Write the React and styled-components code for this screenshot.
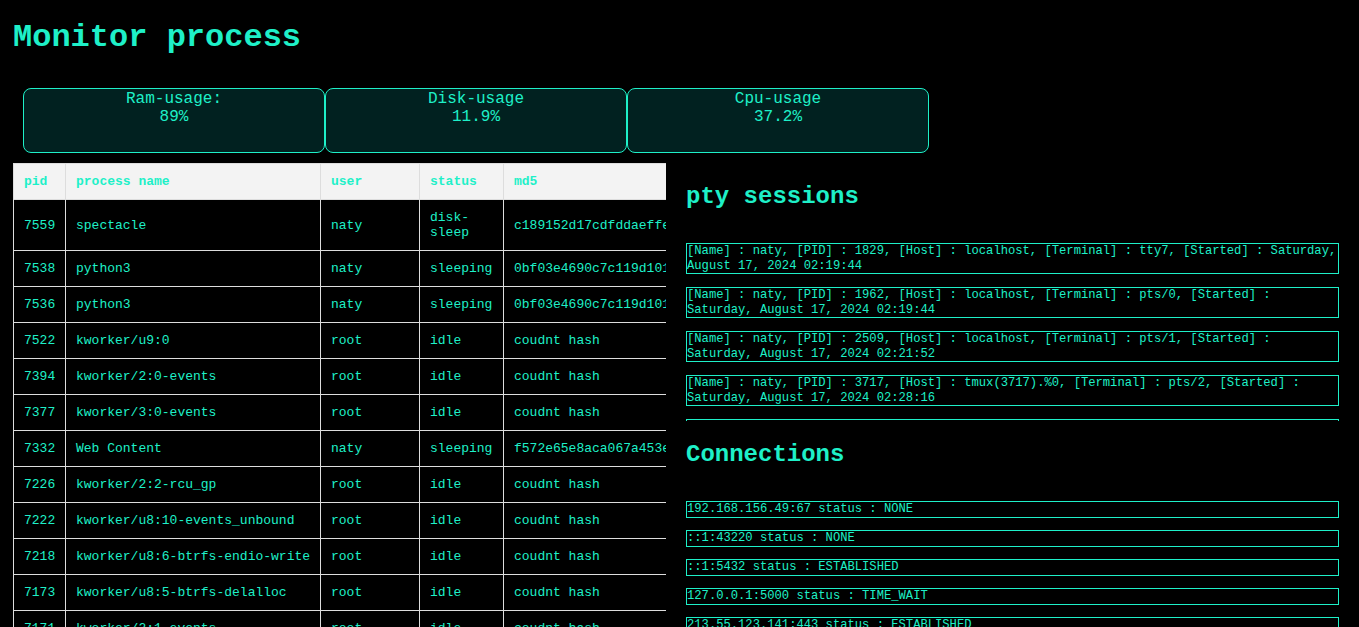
import React from "react";
import styled, { createGlobalStyle } from "styled-components";

const accent = "#1ef0c8";

const GlobalStyle = createGlobalStyle`
  html, body {
    margin: 0;
    padding: 0;
    background: #000;
  }
  body {
    font-family: "Liberation Mono", "DejaVu Sans Mono", monospace;
    color: ${accent};
  }
`;

const processes = [
  ["7559", "spectacle", "naty", "disk-sleep", "c189152d17cdfddaeffe3a0c6b1e92d4"],
  ["7538", "python3", "naty", "sleeping", "0bf03e4690c7c119d1014c5a7e2b8f36"],
  ["7536", "python3", "naty", "sleeping", "0bf03e4690c7c119d1014c5a7e2b8f36"],
  ["7522", "kworker/u9:0", "root", "idle", "coudnt hash"],
  ["7394", "kworker/2:0-events", "root", "idle", "coudnt hash"],
  ["7377", "kworker/3:0-events", "root", "idle", "coudnt hash"],
  ["7332", "Web Content", "naty", "sleeping", "f572e65e8aca067a453e9d1b0c27f6a8"],
  ["7226", "kworker/2:2-rcu_gp", "root", "idle", "coudnt hash"],
  ["7222", "kworker/u8:10-events_unbound", "root", "idle", "coudnt hash"],
  ["7218", "kworker/u8:6-btrfs-endio-write", "root", "idle", "coudnt hash"],
  ["7173", "kworker/u8:5-btrfs-delalloc", "root", "idle", "coudnt hash"],
  ["7171", "kworker/2:1-events", "root", "idle", "coudnt hash"],
  ["7160", "kworker/0:1-events", "root", "idle", "coudnt hash"],
  ["7112", "Isolated Web Co", "naty", "sleeping", "f572e65e8aca067a453e9d1b0c27f6a8"],
];

const sessions = [
  "[Name] : naty, [PID] : 1829, [Host] : localhost, [Terminal] : tty7, [Started] : Saturday, August 17, 2024 02:19:44",
  "[Name] : naty, [PID] : 1962, [Host] : localhost, [Terminal] : pts/0, [Started] : Saturday, August 17, 2024 02:19:44",
  "[Name] : naty, [PID] : 2509, [Host] : localhost, [Terminal] : pts/1, [Started] : Saturday, August 17, 2024 02:21:52",
  "[Name] : naty, [PID] : 3717, [Host] : tmux(3717).%0, [Terminal] : pts/2, [Started] : Saturday, August 17, 2024 02:28:16",
  "[Name] : naty, [PID] : 4120, [Host] : tmux(3717).%1, [Terminal] : pts/3, [Started] : Saturday, August 17, 2024 02:31:05",
];

const connections = [
  "192.168.156.49:67 status : NONE",
  "::1:43220 status : NONE",
  "::1:5432 status : ESTABLISHED",
  "127.0.0.1:5000 status : TIME_WAIT",
  "213.55.123.141:443 status : ESTABLISHED",
  "34.107.243.93:443 status : ESTABLISHED",
  "127.0.0.1:5432 status : LISTEN",
];

const App = () => {
  return (
    <Page>
      <GlobalStyle />
      <Title>Monitor process</Title>

      <Stats>
        <StatCard>
          <div>Ram-usage:</div>
          <div>89%</div>
        </StatCard>
        <StatCard>
          <div>Disk-usage</div>
          <div>11.9%</div>
        </StatCard>
        <StatCard>
          <div>Cpu-usage</div>
          <div>37.2%</div>
        </StatCard>
      </Stats>

      <Columns>
        <TableWrap>
          <Table>
            <colgroup>
              <col style={{ width: 52 }} />
              <col style={{ width: 255 }} />
              <col style={{ width: 99 }} />
              <col style={{ width: 84 }} />
              <col style={{ width: 280 }} />
            </colgroup>
            <thead>
              <tr>
                <th>pid</th>
                <th>process name</th>
                <th>user</th>
                <th>status</th>
                <th>md5</th>
              </tr>
            </thead>
            <tbody>
              {processes.map((p) => (
                <tr key={p[0]}>
                  {p.map((cell, i) => (
                    <td key={i}>{cell}</td>
                  ))}
                </tr>
              ))}
            </tbody>
          </Table>
        </TableWrap>

        <Side>
          <SectionTitle>pty sessions</SectionTitle>
          <SessionList>
            {sessions.map((s) => (
              <SessionBox key={s}>{s}</SessionBox>
            ))}
          </SessionList>

          <SectionTitle>Connections</SectionTitle>
          <ConnList>
            {connections.map((c) => (
              <ConnBox key={c}>{c}</ConnBox>
            ))}
          </ConnList>
        </Side>
      </Columns>
    </Page>
  );
};

const Page = styled.div`
  padding: 20px 0 0 13px;
`;

const Title = styled.h1`
  margin: 0;
  font-size: 32px;
  font-weight: bold;
  line-height: 36px;
  color: ${accent};
`;

const Stats = styled.div`
  display: flex;
  margin: 32px 0 0 10px;
`;

const StatCard = styled.div`
  box-sizing: border-box;
  width: 302px;
  height: 65px;
  padding-top: 1px;
  border: 1px solid ${accent};
  border-radius: 8px;
  background: #012120;
  text-align: center;
  font-size: 16px;
  line-height: 18px;
  color: ${accent};
`;

const Columns = styled.div`
  display: flex;
  align-items: flex-start;
  margin-top: 10px;
`;

const TableWrap = styled.div`
  width: 653px;
  flex-shrink: 0;
  overflow: hidden;
`;

const Table = styled.table`
  border-collapse: collapse;
  table-layout: fixed;
  width: 770px;
  font-size: 13px;

  th,
  td {
    border: 1px solid #dddddd;
    padding: 10px 4px 10px 10px;
    text-align: left;
    vertical-align: middle;
    line-height: 15px;
    color: ${accent};
    overflow: hidden;
  }

  th {
    background: #f3f3f3;
    font-weight: bold;
  }

  td {
    background: #000;
  }

  td:last-child {
    white-space: nowrap;
  }
`;

const Side = styled.div`
  width: 653px;
  margin-left: 20px;
  flex-shrink: 0;
`;

const SectionTitle = styled.h2`
  margin: 20px 0;
  font-size: 24px;
  font-weight: bold;
  line-height: 27px;
  color: ${accent};
`;

const SessionList = styled.div`
  height: 191px;
  overflow: hidden;
`;

const SessionBox = styled.div`
  margin-top: 13px;
  border: 1px solid ${accent};
  font-size: 12.16px;
  line-height: 14.5px;
  color: ${accent};
`;

const ConnList = styled.div`
  padding-top: 1px;
`;

const ConnBox = styled.div`
  margin-top: 12px;
  border: 1px solid ${accent};
  font-size: 12.16px;
  line-height: 15px;
  color: ${accent};
`;

export default App;
